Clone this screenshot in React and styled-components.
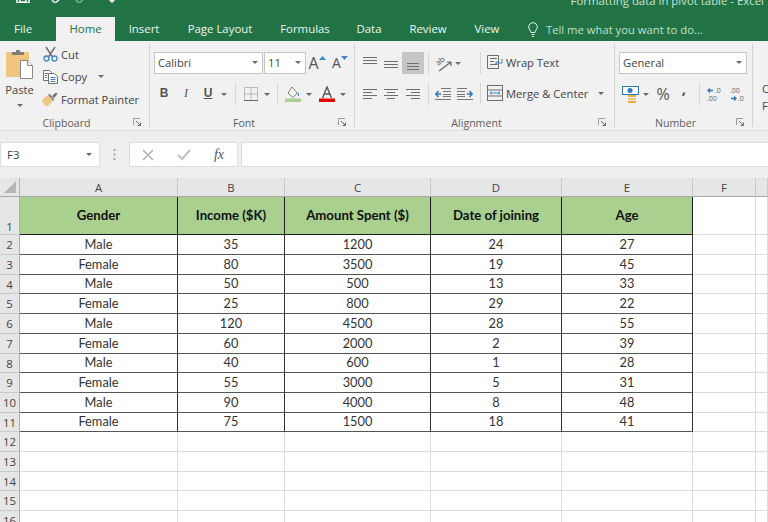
import React from "react";
import styled, { createGlobalStyle } from "styled-components";

const Global = createGlobalStyle`
  html, body { margin: 0; padding: 0; background: #fff; }
  body { font-family: "Open Sans", "Noto Sans", sans-serif; }
  * { box-sizing: border-box; }
`;

const Page = styled.div`
  width: 768px; height: 522px; overflow: hidden; background: #fff;
  display: flex; flex-direction: column;
`;
const TitleBar = styled.div`
  height: 17px; flex: none; background: #217346; display: flex; overflow: hidden; padding-left: 16px;
`;
const QuickIcon = styled.svg`
  display: block; flex: none; margin-left: ${p => p.$ml}px;
`;
const WindowTitle = styled.div`
  margin-left: auto; margin-right: 4px; margin-top: -7px; height: 16px; line-height: 16px;
  font-size: 11.4px; color: #c9e2d3; white-space: nowrap;
`;
const TabBar = styled.div`
  height: 24px; flex: none; background: #217346; display: flex; align-items: stretch;
`;
const Tab = styled.div`
  width: ${p => p.$w}px; flex: none; font-size: 11.4px; line-height: 24px;
  text-align: ${p => (p.$left ? "left" : "center")};
  padding-left: ${p => (p.$left ? 14 : 0)}px;
  color: ${p => (p.$active ? "#217346" : "#eef5f0")};
  background: ${p => (p.$active ? "#f1f1f1" : "transparent")};
`;
const TellMe = styled.div`
  margin-left: 15px; display: flex; align-items: center; gap: 8px; font-size: 11.25px; color: #bfe0cc; white-space: nowrap;
`;
const Ribbon = styled.div`
  height: 90px; flex: none; background: #f1f1f1; border-bottom: 1px solid #dcdcdc; display: flex; overflow: hidden;
`;
const Group = styled.section`
  width: ${p => p.$w}px; flex: none; display: flex; flex-direction: column;
  margin: 3px 0 3px; border-right: 1px solid #d2d2d2;
`;
const GroupBody = styled.div`
  flex: 1; min-height: 0; padding: ${p => p.$pt ?? 8}px 0 0 ${p => p.$pl ?? 4}px; display: ${p => (p.$row ? "flex" : "block")};
`;
const GroupLabel = styled.div`
  height: 17px; flex: none; display: grid; grid-template-columns: 1fr 16px; align-items: center;
  font-size: 10.6px; color: #5f5f5f; text-align: center; margin-bottom: -4px;
`;
const ToolRow = styled.div`
  height: 22px; display: flex; align-items: center; margin-bottom: 9px; white-space: nowrap;
`;
const Slot = styled.div`
  width: ${p => p.$w}px; height: 22px; flex: none; display: flex; align-items: center; justify-content: center;
  background: ${p => (p.$active ? "#c6c6c6" : "transparent")};
`;
const Sep = styled.div`
  width: ${p => p.$w}px; height: 22px; flex: none; display: flex; justify-content: center;
  &::before { content: ""; width: 1px; height: 100%; background: #d6d6d6; }
`;
const Select = styled.div`
  width: ${p => p.$w}px; height: 22px; flex: none; margin-right: ${p => p.$mr ?? 0}px;
  background: #fff; border: 1px solid #c6c6c6; display: flex; align-items: center;
  justify-content: space-between; padding: 0 4px 2px 3px; font-size: 11.2px; color: #444;
`;
const Caret = styled.span`
  display: inline-block; flex: none; width: 0; height: 0; margin-left: ${p => p.$ml ?? 0}px;
  border-left: 3px solid transparent; border-right: 3px solid transparent; border-top: 3px solid #6a6a6a;
`;
const Letter = styled.span`
  font-size: 12px; color: #555; padding-bottom: 2px;
  font-weight: ${p => (p.$bold ? 700 : 400)};
  font-style: ${p => (p.$italic ? "italic" : "normal")};
  font-family: ${p => (p.$italic ? '"Liberation Serif", serif' : '"Liberation Sans", sans-serif')};
  text-decoration: ${p => (p.$under ? "underline" : "none")};
`;
const Glyph = styled.span`
  font-family: "Open Sans", sans-serif; color: #555; line-height: 18px;
  font-size: ${p => p.$size}px; font-weight: ${p => p.$weight ?? 400};
  padding-bottom: ${p => p.$lift ?? 0}px;
`;
const PasteColumn = styled.div`
  width: 39px; flex: none; display: flex; flex-direction: column; align-items: center; padding-top: 5px;
  font-size: 11.2px; color: #444;
`;
const PasteLabel = styled.div` margin-top: 3px; line-height: 16px; margin-bottom: 6px; `;
const ClipColumn = styled.div` display: flex; flex-direction: column; margin-left: 3px; margin-top: -1px; `;
const ClipRow = styled.div`
  height: 22.5px; display: flex; align-items: center; gap: 3px; font-size: 11.2px; color: #444; white-space: nowrap;
`;
const ClipIcon = styled.div` width: 16px; display: flex; justify-content: center; flex: none; `;
const CutOffLine = styled.div`
  height: 17px; line-height: 17px; font-size: 11.2px; color: #444; white-space: nowrap;
`;
const TextTool = styled.div`
  display: flex; align-items: center; font-size: 11.2px; color: #444; gap: 3px; padding-bottom: 2px;
`;
const FormulaBar = styled.div`
  height: 47px; flex: none; background: #eeeeee; display: flex; padding: 11px 0; align-items: stretch;
`;
const NameBox = styled.div`
  width: 100px; flex: none; background: #fff; border: 1px solid #dedede; display: flex; align-items: center;
  justify-content: space-between; padding: 0 7px 0 6px; font-size: 11.4px; color: #444;
`;
const GripSlot = styled.div`
  width: 29px; flex: none; display: flex; align-items: center; justify-content: center;
`;
const FxBox = styled.div`
  width: 109px; flex: none; background: #fff; border: 1px solid #dedede; display: flex; align-items: center;
  padding: 0 13px 0 12px; justify-content: space-between;
`;
const FxLabel = styled.span`
  font-family: "Liberation Serif", serif; font-style: italic; font-size: 14px; color: #555;
`;
const FormulaInput = styled.div`
  flex: 1; margin-left: 3px; background: #fff; border: 1px solid #dedede; border-right: 0;
`;
const Sheet = styled.div`
  display: grid;
  grid-template-columns: 20px 158px 107px 146px 131px 131px 63px 1fr;
  grid-template-rows: 19px 38px 20px 20px 19px 20px 20px 20px 19px 20px 20px 19px 20px 20px 19px 20px 20px;
  font-family: Lato, "Liberation Sans", sans-serif;
`;
const ColHead = styled.div`
  background: #e6e6e6; border-bottom: 1px solid #a9a9a9; border-right: 1px solid #c9c9c9;
  display: flex; align-items: center; justify-content: center; font-size: 11.4px; color: #444;
  font-family: "Open Sans", sans-serif;
`;
const Corner = styled(ColHead)`
  align-items: flex-end; justify-content: flex-end; padding: 0 3px 3px 0; border-right-color: #b4b4b4;
`;
const RowHead = styled.div`
  background: #e6e6e6; border-bottom: 1px solid #c8c8c8; border-right: 1px solid #ababab;
  display: flex; align-items: ${p => (p.$tall ? "flex-end" : "center")}; justify-content: center;
  font-size: 11.4px; color: #444; font-family: "Open Sans", sans-serif; overflow: hidden;
`;
const Blank = styled.div` border-right: 1px solid #dcdcdc; border-bottom: 1px solid #dcdcdc; background: #fff; `;
const HeadCell = styled.div`
  background: #a9d08e; border-right: 1px solid #1c1c1c; border-bottom: 1px solid #1c1c1c; padding-bottom: 2px;
  display: flex; align-items: center; justify-content: center; font-size: 13.2px; font-weight: 700; color: #111;
`;
const DataCell = styled.div`
  background: #fff; border-right: 1px solid #333; border-bottom: 1px solid #555; padding-bottom: 2px;
  display: flex; align-items: center; justify-content: center; font-size: 12.8px; color: #333;
`;

const Launcher = () => (
  <svg width="9" height="9" viewBox="0 0 9 9" fill="none">
    <path d="M.5 7V.5H7" stroke="#9a9a9a" />
    <path d="M3 3l4 4M4.5 7.5h3v-3" stroke="#666" />
  </svg>
);
const Lines = ({ rows, w = 14 }) => (
  <svg width={w} height="14" viewBox={`0 0 ${w} 14`} fill="none" stroke="#6e6e6e">
    {rows.map(([y, a, b], i) => <path key={i} d={`M${a} ${y}.5H${b}`} />)}
  </svg>
);
const PasteIcon = () => (
  <svg width="28" height="30" viewBox="0 0 28 30">
    <rect x="0" y="3" width="23" height="25" rx="1.5" fill="#efc680" />
    <path d="M6 6V3h4V1h4v2h4v3z" fill="#7d7d7d" />
    <path d="M14.500 11.500h7l5 5v13h-12z" fill="#fff" stroke="#8a8a8a" />
    <path d="M21.500 11.500v5h5" fill="#eee" stroke="#8a8a8a" />
  </svg>
);
const CutIcon = () => (
  <svg width="15" height="16" viewBox="0 0 15 16" fill="none">
    <path d="M3 1l6.500 10M12 1L5.500 11" stroke="#6f6f6f" strokeWidth="1.500" />
    <circle cx="3.500" cy="12.500" r="2.500" stroke="#3e86c9" strokeWidth="1.300" />
    <circle cx="11.500" cy="12.500" r="2.500" stroke="#3e86c9" strokeWidth="1.300" />
  </svg>
);
const CopyIcon = () => (
  <svg width="15" height="14" viewBox="0 0 15 14" fill="#fff" stroke="#6e6e6e">
    <path d="M.5.5h6l2 2v8h-8z" />
    <path d="M5.500 3.500h6l3 3v7h-9z" />
    <path d="M7.500 7.500h5M7.500 9.500h5M7.500 11.500h5" stroke="#3e86c9" />
    <path d="M2 3.500h3M2 5.500h2M2 7.500h2" />
  </svg>
);
const BrushIcon = () => (
  <svg width="16" height="14" viewBox="0 0 16 14">
    <path d="M0 8l6-5 5 6-5 5H3z" fill="#efc680" />
    <path d="M6 3l5 6 1.500-1.500-5-6z" fill="#8c8c8c" />
    <path d="M10 4l4-3.500L15.500 2 12 6z" fill="#6e6e6e" />
  </svg>
);
const GrowA = ({ up }) => (
  <svg width="7" height="4" viewBox="0 0 7 4" style={{ marginBottom: 11 }}>
    <path d={up ? "M0 4L3.500 0 7 4z" : "M0 0h7L3.500 4z"} fill="#3e86c9" />
  </svg>
);
const BorderIcon = () => (
  <svg width="14" height="14" viewBox="0 0 14 14" fill="none" stroke="#8a8a8a" strokeDasharray="1 1">
    <rect x=".5" y=".5" width="13" height="13" />
    <path d="M7 .5v13M.5 7h13" />
    <path d="M0 13.500h14" stroke="#666" strokeDasharray="none" />
  </svg>
);
const FillIcon = () => (
  <svg width="16" height="16" viewBox="0 0 16 16">
    <path d="M3 7l4-6 5 6-4 4.500z" fill="#fff" stroke="#777" />
    <path d="M13 6c1.500 2 1.500 4 .5 4s-1-2-.5-4z" fill="#3e86c9" />
    <rect x="0" y="12.500" width="16" height="3.500" fill="#a9d08e" />
  </svg>
);
const ColorIcon = () => (
  <svg width="16" height="16" viewBox="0 0 16 16">
    <path d="M3.500 12L8 1l4.500 11M5.500 8h5" fill="none" stroke="#555" strokeWidth="1.400" />
    <rect y="12.500" width="16" height="3.500" fill="#e60000" />
  </svg>
);
const OrientIcon = () => (
  <svg width="17" height="17" viewBox="0 0 17 17" fill="none" stroke="#666">
    <text x="1" y="9" fontSize="8" fill="#555" stroke="none" fontFamily="Open Sans" transform="rotate(-40 5 7)">ab</text>
    <path d="M4 16L16 7M16 7h-4M16 7v4" strokeWidth="1.200" />
  </svg>
);
const IndentIcon = ({ flip }) => (
  <svg width="16" height="12" viewBox="0 0 16 12" fill="none" style={flip ? { transform: "scaleX(-1)" } : undefined}>
    <path d="M6 .5h10M8 3.500h8M8 6.500h8M8 8.500h8M0 11.500h16" stroke="#777" />
    <path d="M6 6H1M3.500 3L.8 6l2.700 3" stroke="#2f78c0" strokeWidth="1.500" />
  </svg>
);
const WrapIcon = () => (
  <svg width="16" height="16" viewBox="0 0 16 16" fill="none" stroke="#6e6e6e">
    <path d="M.5 1.500h11v13H.5zM3 4.500h7M3 7.500h4M3 10.500h7" />
    <path d="M15 5v4H8.500M10.500 7l-2 2 2 2" stroke="#3e86c9" />
  </svg>
);
const MergeIcon = () => (
  <svg width="16" height="16" viewBox="0 0 16 16" fill="none" stroke="#6e6e6e">
    <rect x=".5" y=".5" width="15" height="15" />
    <path d="M.5 5h15M.5 11h15" />
    <path d="M3 8h10M4.500 6.500L3 8l1.500 1.500M11.500 6.500L13 8l-1.500 1.500" stroke="#3e86c9" />
  </svg>
);
const MoneyIcon = () => (
  <svg width="17" height="17" viewBox="0 0 17 17">
    <rect x=".5" y=".5" width="16" height="8" fill="#fff" stroke="#2f78c0" />
    <circle cx="8" cy="4.500" r="2.500" fill="#2f78c0" />
    <rect x="6" y="9" width="8" height="2" fill="#e9a93f" />
    <rect x="6" y="12" width="8" height="2" fill="#efc680" />
    <rect x="6" y="15" width="8" height="2" fill="#e9a93f" />
  </svg>
);
const DecimalIcon = ({ more }) => (
  <svg width="16" height="15" viewBox="0 0 16 15" fill="none">
    <path d={more ? "M1 3.500h5M3 1.500l-2 2 2 2" : "M1 11.500h5M4 9.500l2 2-2 2"} stroke="#2f78c0" strokeWidth="1.300" />
    <text x={more ? 8 : 0} y="6" fontSize="7" fill="#666" fontFamily="Open Sans">{more ? ".0" : ".00"}</text>
    <text x={more ? 0 : 8} y="13.5" fontSize="7" fill="#666" fontFamily="Open Sans">{more ? ".00" : ".0"}</text>
  </svg>
);
const Bulb = () => (
  <svg width="10" height="15" viewBox="0 0 10 15" fill="none" stroke="#eaf4ee">
    <path d="M3 10.500C3 8.500.7 7.500.7 5a4.300 4.300 0 0 1 8.600 0C9.300 7.500 7 8.500 7 10.500z" />
    <path d="M3.500 12.500h3M4 14.500h2" />
  </svg>
);
const Grip = () => (
  <svg width="3" height="11" viewBox="0 0 3 11" fill="#a8a8a8">
    <rect width="2" height="2" x=".5" />
    <rect width="2" height="2" x=".5" y="4.500" />
    <rect width="2" height="2" x=".5" y="9" />
  </svg>
);
const CrossIcon = () => (
  <svg width="12" height="12" viewBox="0 0 12 12" fill="none" stroke="#b4b4b4" strokeWidth="1.500">
    <path d="M1 1l10 10M11 1L1 11" />
  </svg>
);
const CheckIcon = () => (
  <svg width="14" height="12" viewBox="0 0 14 12" fill="none" stroke="#c0c0c0" strokeWidth="2">
    <path d="M1 6l4 4 8-9" />
  </svg>
);
const CornerMark = () => (
  <svg width="12" height="12" viewBox="0 0 12 12"><path d="M12 0v12H0z" fill="#b6b6b6" /></svg>
);

const columns = ["A", "B", "C", "D", "E", "F"];
const headers = ["Gender", "Income ($K)", "Amount Spent ($)", "Date of joining", "Age"];
const rows = [
  ["Male", 35, 1200, 24, 27],
  ["Female", 80, 3500, 19, 45],
  ["Male", 50, 500, 13, 33],
  ["Female", 25, 800, 29, 22],
  ["Male", 120, 4500, 28, 55],
  ["Female", 60, 2000, 2, 39],
  ["Male", 40, 600, 1, 28],
  ["Female", 55, 3000, 5, 31],
  ["Male", 90, 4000, 8, 48],
  ["Female", 75, 1500, 18, 41],
];
const tabs = [
  ["File", 56], ["Home", 59], ["Insert", 58], ["Page Layout", 94],
  ["Formulas", 76], ["Data", 52], ["Review", 66], ["View", 52],
];

export default function App() {
  return (
    <Page>
      <Global />
      <TitleBar>
        <QuickIcon width="14" height="3" viewBox="0 0 14 3" $ml={0}><path d="M1 0v3h12V0M4 0v2h6V0" fill="none" stroke="#fff" strokeWidth="1.500" /></QuickIcon>
        <QuickIcon width="10" height="3" viewBox="0 0 10 3" $ml={21}><path d="M1 0l3 3 4-3" fill="none" stroke="#eef5f0" strokeWidth="1.500" /></QuickIcon>
        <QuickIcon width="10" height="3" viewBox="0 0 10 3" $ml={14}><path d="M1 0l3 3 4-3" fill="none" stroke="#7fb397" strokeWidth="1.500" /></QuickIcon>
        <QuickIcon width="6" height="3" viewBox="0 0 6 3" $ml={24}><path d="M0 0h6L3 3z" fill="#fff" /></QuickIcon>
        <WindowTitle>Formatting data in pivot table - Excel</WindowTitle>
      </TitleBar>
      <TabBar>
        {tabs.map(([t, w]) => (
          <Tab key={t} $w={w} $active={t === "Home"} $left={t === "File"}>{t}</Tab>
        ))}
        <TellMe><Bulb />Tell me what you want to do...</TellMe>
      </TabBar>
      <Ribbon>
        <Group $w={150}>
          <GroupBody $row $pt={0} $pl={0}>
            <PasteColumn>
              <PasteIcon />
              <PasteLabel>Paste</PasteLabel>
              <Caret />
            </PasteColumn>
            <ClipColumn>
              <ClipRow><ClipIcon><CutIcon /></ClipIcon>Cut</ClipRow>
              <ClipRow><ClipIcon><CopyIcon /></ClipIcon>Copy<Caret $ml={8} /></ClipRow>
              <ClipRow><ClipIcon><BrushIcon /></ClipIcon>Format Painter</ClipRow>
            </ClipColumn>
          </GroupBody>
          <GroupLabel><span>Clipboard</span><Launcher /></GroupLabel>
        </Group>
        <Group $w={205}>
          <GroupBody>
            <ToolRow>
              <Select $w={109} $mr={1}>Calibri<Caret /></Select>
              <Select $w={42}>11<Caret /></Select>
              <Slot $w={22}><Glyph $size={16}>A</Glyph><GrowA up /></Slot>
              <Slot $w={24}><Glyph $size={14}>A</Glyph><GrowA /></Slot>
            </ToolRow>
            <ToolRow>
              <Slot $w={20}><Letter $bold>B</Letter></Slot>
              <Slot $w={24}><Letter $italic>I</Letter></Slot>
              <Slot $w={20}><Letter $bold $under>U</Letter></Slot>
              <Slot $w={12}><Caret /></Slot>
              <Sep $w={10} />
              <Slot $w={22}><BorderIcon /></Slot>
              <Slot $w={10}><Caret /></Slot>
              <Sep $w={10} />
              <Slot $w={22}><FillIcon /></Slot>
              <Slot $w={10}><Caret /></Slot>
              <Slot $w={26}><ColorIcon /></Slot>
              <Slot $w={6}><Caret /></Slot>
            </ToolRow>
          </GroupBody>
          <GroupLabel><span>Font</span><Launcher /></GroupLabel>
        </Group>
        <Group $w={260}>
          <GroupBody>
            <ToolRow>
              <Slot $w={21}><Lines rows={[[1, 0, 14], [4, 0, 14], [7, 0, 14]]} /></Slot>
              <Slot $w={22}><Lines rows={[[5, 0, 14], [8, 0, 14], [11, 0, 14]]} /></Slot>
              <Slot $w={22} $active><Lines rows={[[7, 1, 13], [10, 1, 13], [13, 1, 13]]} /></Slot>
              <Sep $w={8} />
              <Slot $w={22}><OrientIcon /></Slot>
              <Slot $w={8}><Caret /></Slot>
              <Slot $w={14} />
              <Sep $w={8} />
              <Slot $w={3} />
              <TextTool><WrapIcon />Wrap Text</TextTool>
            </ToolRow>
            <ToolRow>
              <Slot $w={21}><Lines rows={[[2, 0, 14], [5, 0, 9], [8, 0, 14], [11, 0, 9]]} /></Slot>
              <Slot $w={22}><Lines rows={[[2, 0, 14], [5, 3, 11], [8, 0, 14], [11, 3, 11]]} /></Slot>
              <Slot $w={22}><Lines rows={[[2, 0, 14], [5, 5, 14], [8, 0, 14], [11, 5, 14]]} /></Slot>
              <Sep $w={8} />
              <Slot $w={22}><IndentIcon /></Slot>
              <Slot $w={22}><IndentIcon flip /></Slot>
              <Sep $w={8} />
              <Slot $w={3} />
              <TextTool><MergeIcon />Merge &amp; Center<Caret $ml={7} /></TextTool>
            </ToolRow>
          </GroupBody>
          <GroupLabel><span>Alignment</span><Launcher /></GroupLabel>
        </Group>
        <Group $w={138}>
          <GroupBody>
            <ToolRow><Select $w={128}>General<Caret /></Select></ToolRow>
            <ToolRow>
              <Slot $w={23}><MoneyIcon /></Slot>
              <Slot $w={8}><Caret /></Slot>
              <Slot $w={26}><Glyph $size={16}>%</Glyph></Slot>
              <Slot $w={16}><Glyph $size={15} $weight={700} $lift={12}>,</Glyph></Slot>
              <Sep $w={14} />
              <Slot $w={18}><DecimalIcon more /></Slot>
              <Slot $w={28}><DecimalIcon /></Slot>
            </ToolRow>
          </GroupBody>
          <GroupLabel><span>Number</span><Launcher /></GroupLabel>
        </Group>
        <Group $w={120}>
          <GroupBody $pt={36} $pl={9}>
            <CutOffLine>Conditional</CutOffLine>
            <CutOffLine>Formatting</CutOffLine>
          </GroupBody>
        </Group>
      </Ribbon>
      <FormulaBar>
        <NameBox>F3<Caret /></NameBox>
        <GripSlot><Grip /></GripSlot>
        <FxBox><CrossIcon /><CheckIcon /><FxLabel>fx</FxLabel></FxBox>
        <FormulaInput />
      </FormulaBar>
      <Sheet>
        <Corner><CornerMark /></Corner>
        {columns.map(c => <ColHead key={c}>{c}</ColHead>)}
        <ColHead />
        <RowHead $tall>1</RowHead>
        {headers.map(h => <HeadCell key={h}>{h}</HeadCell>)}
        <Blank /><Blank />
        {rows.map((r, i) => (
          <React.Fragment key={i}>
            <RowHead>{i + 2}</RowHead>
            {r.map((v, j) => <DataCell key={j}>{v}</DataCell>)}
            <Blank /><Blank />
          </React.Fragment>
        ))}
        {[12, 13, 14, 15, 16].map(n => (
          <React.Fragment key={n}>
            <RowHead>{n}</RowHead>
            <Blank /><Blank /><Blank /><Blank /><Blank /><Blank /><Blank />
          </React.Fragment>
        ))}
      </Sheet>
    </Page>
  );
}
